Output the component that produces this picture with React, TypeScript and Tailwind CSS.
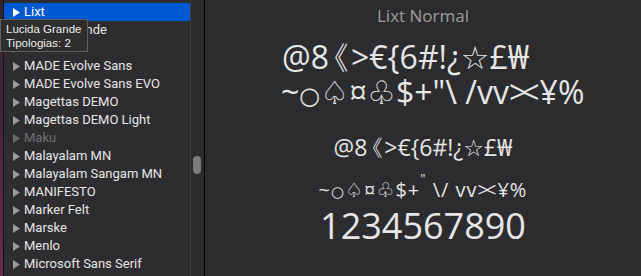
import React from "react";

const rows: { name: string; dim?: boolean; selected?: boolean }[] = [
  { name: "Lixt", selected: true },
  { name: "Lucida Grande" },
  { name: "Luminari" },
  { name: "MADE Evolve Sans" },
  { name: "MADE Evolve Sans EVO" },
  { name: "Magettas DEMO" },
  { name: "Magettas DEMO Light" },
  { name: "Maku", dim: true },
  { name: "Malayalam MN" },
  { name: "Malayalam Sangam MN" },
  { name: "MANIFESTO" },
  { name: "Marker Felt" },
  { name: "Marske" },
  { name: "Menlo" },
  { name: "Microsoft Sans Serif" },
];

function Tri({ color }: { color: string }) {
  return (
    <svg width="7" height="9" viewBox="0 0 7 9" className="shrink-0">
      <polygon points="0,0 7,4.5 0,9" fill={color} />
    </svg>
  );
}

export default function App() {
  const sans = { fontFamily: 'Roboto, "Liberation Sans", Arial, sans-serif' };
  const tip = { fontFamily: '"Liberation Sans", Arial, sans-serif' };
  const sample = { fontFamily: '"Open Sans", "Noto Sans", "DejaVu Sans", sans-serif' };
  return (
    <div className="relative flex w-[641px] h-[276px] overflow-hidden bg-[#2c2c2e]">
      <div className="w-[3px] h-full bg-gradient-to-b from-[#2e2530] via-[#4a2440] to-[#6a2a4c]" />
      <div className="w-px h-full bg-[#141414]" />
      <div className="w-[186px] h-full bg-[#2d2d2f] pt-[3px]" style={sans}>
        {rows.map((r) => (
          <div
            key={r.name}
            className={
              "flex items-center h-[18px] pl-[9px] gap-[4px] text-[13px] whitespace-nowrap " +
              (r.selected ? "bg-[#0059d1] text-white" : r.dim ? "text-[#6e6e70]" : "text-[#e6e6e6]")
            }
          >
            <Tri color={r.selected ? "#ffffff" : r.dim ? "#6a6a6a" : "#9a9a9a"} />
            <span>{r.name}</span>
          </div>
        ))}
      </div>
      <div className="w-px h-full bg-[#3d3d3f]" />
      <div className="relative w-[13px] h-full bg-[#2b2b2d]">
        <div className="absolute left-[2px] top-[156px] w-[8px] h-[18px] rounded-full bg-[#7b7b7b]" />
      </div>
      <div className="w-px h-full bg-black" />
      <div className="flex-1 h-full flex flex-col text-[#e6e6e6]" style={sample}>
        <div className="text-center text-[17px] leading-[16px] mt-[8px] text-[#9d9d9d]">
          Lixt Normal
        </div>
        <div className="pl-[77px] text-[32px] leading-[37px] mt-[14px] whitespace-nowrap">
          @8<span className="ml-[-12px] mr-[2px]">《</span>&gt;€{"{"}6#!¿☆£₩
        </div>
        <div className="pl-[76px] text-[32px] leading-[37px] mt-[-2px] whitespace-nowrap">
          ~<span className="text-[24px]">○</span>♤¤♧$+"\ /vv<span className="tracking-[-6px]">&gt;</span>&lt;¥%
        </div>
        <div className="text-center text-[23px] leading-[26px] mt-[21px] whitespace-nowrap">
          @8<span className="ml-[-7px] mr-[1px]">《</span>&gt;€{"{"}6#!¿☆£₩
        </div>
        <div className="text-center text-[20px] leading-[26px] mt-[17px] whitespace-nowrap tracking-[1px]">
          ~<span className="text-[15px]">○</span>♤¤♧$+<span className="relative top-[-14px] text-[13px]">"</span> \/ vv
          <span className="tracking-[-4px]">&gt;</span>&lt;¥%
        </div>
        <div className="text-center text-[36px] leading-[40px] mt-[1px] whitespace-nowrap">1234567890</div>
      </div>
      <div
        className="absolute left-0 top-[19px] w-[88px] h-[33px] bg-[#2e2e2e] border border-[#5e5e5e] pl-[5px] pt-[2px] text-[11.5px] leading-[14px] text-[#ececec] whitespace-nowrap"
        style={tip}
      >
        <div>Lucida Grande</div>
        <div>Tipologias: 2</div>
      </div>
    </div>
  );
}
